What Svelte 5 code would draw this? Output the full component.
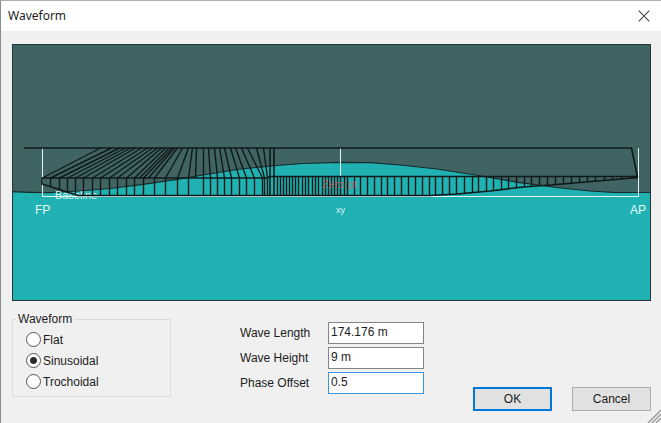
<script>
  let form = $state('Sinusoidal');
  let waveLength = $state('174.176 m');
  let waveHeight = $state('9 m');
  let phaseOffset = $state('0.5');

  const forms = ['Flat', 'Sinusoidal', 'Trochoidal'];

  const DECK = 148;
  const SHELF = 178;
  const KEEL = 195.5;

  const wave = [
    [12, 191.7], [30, 192.3], [50, 192.6], [78, 191], [110, 188.5], [143, 184.3], [177, 179.3],
    [203, 175], [237, 169.5], [270, 166], [303, 163.5], [340, 162.3], [370, 162.6], [400, 165],
    [437, 169], [472, 174.5], [490, 177.5], [520, 182.7], [557, 187.5], [590, 191],
    [613, 192.3], [651, 192.5]
  ].map((p) => p.join(',')).join(' ');

  // Deck position and shelf position of each raking frame
  const rakes = [
    [100, 42], [111, 50], [119, 59], [125, 67], [130, 75], [135, 83], [141, 92], [147, 100],
    [152, 109], [157, 117], [161, 126], [165, 134], [169, 139], [172, 143], [174, 148],
    [177, 154], [182, 165], [188, 177], [192, 188], [196, 195], [203, 203], [208, 210],
    [214, 217], [219, 224], [224, 231], [230, 239], [235, 246], [241, 254], [247, 262],
    [256, 264], [263, 267]
  ];

  const bowFrames = [50, 59, 67, 75, 83, 92, 100, 109, 117, 126, 134, 143, 154, 165, 177, 188,
    203, 210, 217, 224, 231, 239, 246, 254, 262, 264, 267];
  const midFrames = [277, 280, 283, 286, 289, 292, 295, 298, 302, 305, 308, 312, 315, 318, 322,
    325, 328, 331, 334, 337, 340, 344, 347, 354, 360, 367, 374, 381, 387, 394, 401, 408, 415,
    422, 429, 435, 442, 449, 456, 464, 472, 478, 486, 493, 501, 508, 516, 524, 531, 539, 547,
    555, 563, 571, 579, 587, 595, 604, 612, 621, 629];

  const keel = [[42, 184], [78, KEEL], [430, KEEL], [457, 194], [490, 191], [523, 187],
    [557, 184.5], [597, 181], [638, 177.5]];

  function bottom(x) {
    const i = keel.findIndex((p) => p[0] >= x);
    if (i < 1) return keel[0][1];
    const [x0, y0] = keel[i - 1];
    const [x1, y1] = keel[i];
    return y0 + ((y1 - y0) * (x - x0)) / (x1 - x0);
  }
</script>

<div class="dialog">
  <header>
    <h1>Waveform</h1>
    <button class="close" aria-label="Close">
      <svg viewBox="0 0 12 12" width="12" height="12"><path d="M.7 .7 11.3 11.3M11.3 .7 .7 11.3" /></svg>
    </button>
  </header>

  <main>
    <svg class="profile" viewBox="12 44 639 257" role="img" aria-label="Ship profile on wave">
      <rect x="12" y="44" width="639" height="257" fill="#406464" />
      <polygon points="12,301 {wave} 651,301" fill="#20b2b2" />
      <polyline points={wave} fill="none" stroke="#182a2a" stroke-width="1.2" />
      <text x="55" y="199" class="base">Baseline</text>
      <g class="ref">
        <path d="M42.5 148V196.5H638.5V148" />
        <path d="M340.5 148V176" />
      </g>
      <g class="hull">
        <path d="M24 {DECK}H631.5L637.5 177" />
        <path d="M42 {SHELF}H267L270 176.5H638" />
        <polyline points="42,178 {keel.map((p) => p.join(',')).join(' ')}" />
        <path d="M638 177H632" stroke-width="2.4" />
        <path d="M270 {DECK}V{KEEL}M274 {DECK}V{KEEL}" />
      </g>
      <g class="frames">
        {#each rakes as [top, foot]}
          <line x1={top + 0.5} y1={DECK} x2={foot + 0.5} y2={SHELF} />
        {/each}
        {#each bowFrames as x}
          <line x1={x + 0.5} y1={SHELF} x2={x + 0.5} y2={bottom(x)} />
        {/each}
        {#each midFrames as x}
          <line x1={x + 0.5} y1="176" x2={x + 0.5} y2={bottom(x)} />
        {/each}
      </g>
      <text x="322" y="188" class="zero">Zero pt.</text>
      <text x="35" y="214" class="mark">FP</text>
      <text x="630" y="214" class="mark">AP</text>
      <text x="336" y="213" class="axis">xy</text>
      <rect x="12.5" y="44.5" width="638" height="256" fill="none" stroke="#263636" />
    </svg>

    <div class="controls">
      <fieldset>
        <legend>Waveform</legend>
        {#each forms as name}
          <label><input type="radio" name="form" value={name} bind:group={form} />{name}</label>
        {/each}
      </fieldset>

      <div class="fields">
        <label for="length">Wave Length</label>
        <input id="length" type="text" bind:value={waveLength} />
        <label for="height">Wave Height</label>
        <input id="height" type="text" bind:value={waveHeight} />
        <label for="phase">Phase Offset</label>
        <input id="phase" class="active" type="text" bind:value={phaseOffset} />
      </div>

      <div class="actions">
        <button class="push default">OK</button>
        <button class="push">Cancel</button>
      </div>
    </div>
  </main>

  <svg class="grip" viewBox="0 0 14 14" width="14" height="14" aria-hidden="true">
    <path d="M1 14 14 1M5 14 14 5M9 14 14 9" />
  </svg>
</div>

<style>
  :global(body) {
    background: #f0f0f0;
  }
  .dialog {
    position: relative;
    box-sizing: border-box;
    min-height: 100vh;
    border-top: 1px solid #b0b0b0;
    border-left: 1px solid #8a8d90;
    background: #f0f0f0;
    color: #1c1c1c;
    font: 12px/16px "Liberation Sans", Arial, sans-serif;
  }
  header {
    display: flex;
    align-items: center;
    justify-content: space-between;
    height: 30px;
    padding: 0 11px 0 7px;
    background: #fff;
  }
  h1 {
    margin: 0;
    font: 12px/18px "Noto Sans", "Segoe UI", sans-serif;
  }
  .close {
    display: flex;
    padding: 0;
    border: 0;
    background: none;
  }
  .close path {
    stroke: #444;
    stroke-width: 1.1;
  }
  main {
    padding: 13px 10px 0 11px;
  }
  .profile {
    display: block;
    width: 100%;
  }
  .ref path {
    fill: none;
    stroke: #e4f2f2;
  }
  .hull {
    fill: none;
    stroke: #101818;
    stroke-width: 1.6;
  }
  .frames {
    stroke: #101818;
    stroke-width: 1.4;
  }
  .base {
    font-size: 11px;
    fill: #d8f0f0;
  }
  .zero {
    font-size: 11px;
    fill: #d06060;
    fill-opacity: 0.8;
  }
  .mark {
    font-size: 12px;
    fill: #e6f8f8;
  }
  .axis {
    font-size: 9px;
    fill: #d8f4f4;
  }
  .controls {
    display: flex;
    align-items: flex-start;
    padding-top: 10px;
  }
  fieldset {
    box-sizing: border-box;
    width: 159px;
    margin: 0 69px 0 0;
    padding: 2px 12px 4px 13px;
    border: 1px solid #dcdcdc;
  }
  legend {
    margin-left: -10px;
    padding: 0 2px;
  }
  fieldset label {
    display: flex;
    align-items: center;
    gap: 2px;
    height: 21px;
  }
  input[type='radio'] {
    appearance: none;
    box-sizing: border-box;
    width: 15px;
    height: 15px;
    margin: 0;
    border: 1px solid #555;
    border-radius: 50%;
    background: #fff;
  }
  input[type='radio']:checked {
    background: radial-gradient(circle, #2c2c2c 3px, #fff 4px);
  }
  .fields {
    display: grid;
    grid-template-columns: 88px 96px;
    align-items: center;
    row-gap: 3px;
    padding-top: 11px;
  }
  .fields input {
    box-sizing: border-box;
    width: 100%;
    height: 22px;
    padding: 0 2px 2px;
    border: 1px solid #858585;
    border-radius: 0;
    background: #fff;
    color: inherit;
    font: inherit;
    outline: none;
  }
  .fields .active {
    border-color: #3c96dc;
  }
  .actions {
    display: flex;
    gap: 20px;
    margin-left: auto;
    padding-top: 76px;
  }
  .push {
    box-sizing: border-box;
    width: 79px;
    height: 24px;
    padding: 0;
    border: 1px solid #adadad;
    border-radius: 0;
    background: #e1e1e1;
    color: inherit;
    font: inherit;
  }
  .default {
    border: 2px solid #0078d7;
  }
  .grip {
    position: absolute;
    right: 0;
    bottom: 0;
  }
  .grip path {
    stroke: #999;
    stroke-width: 1.4;
  }
</style>
